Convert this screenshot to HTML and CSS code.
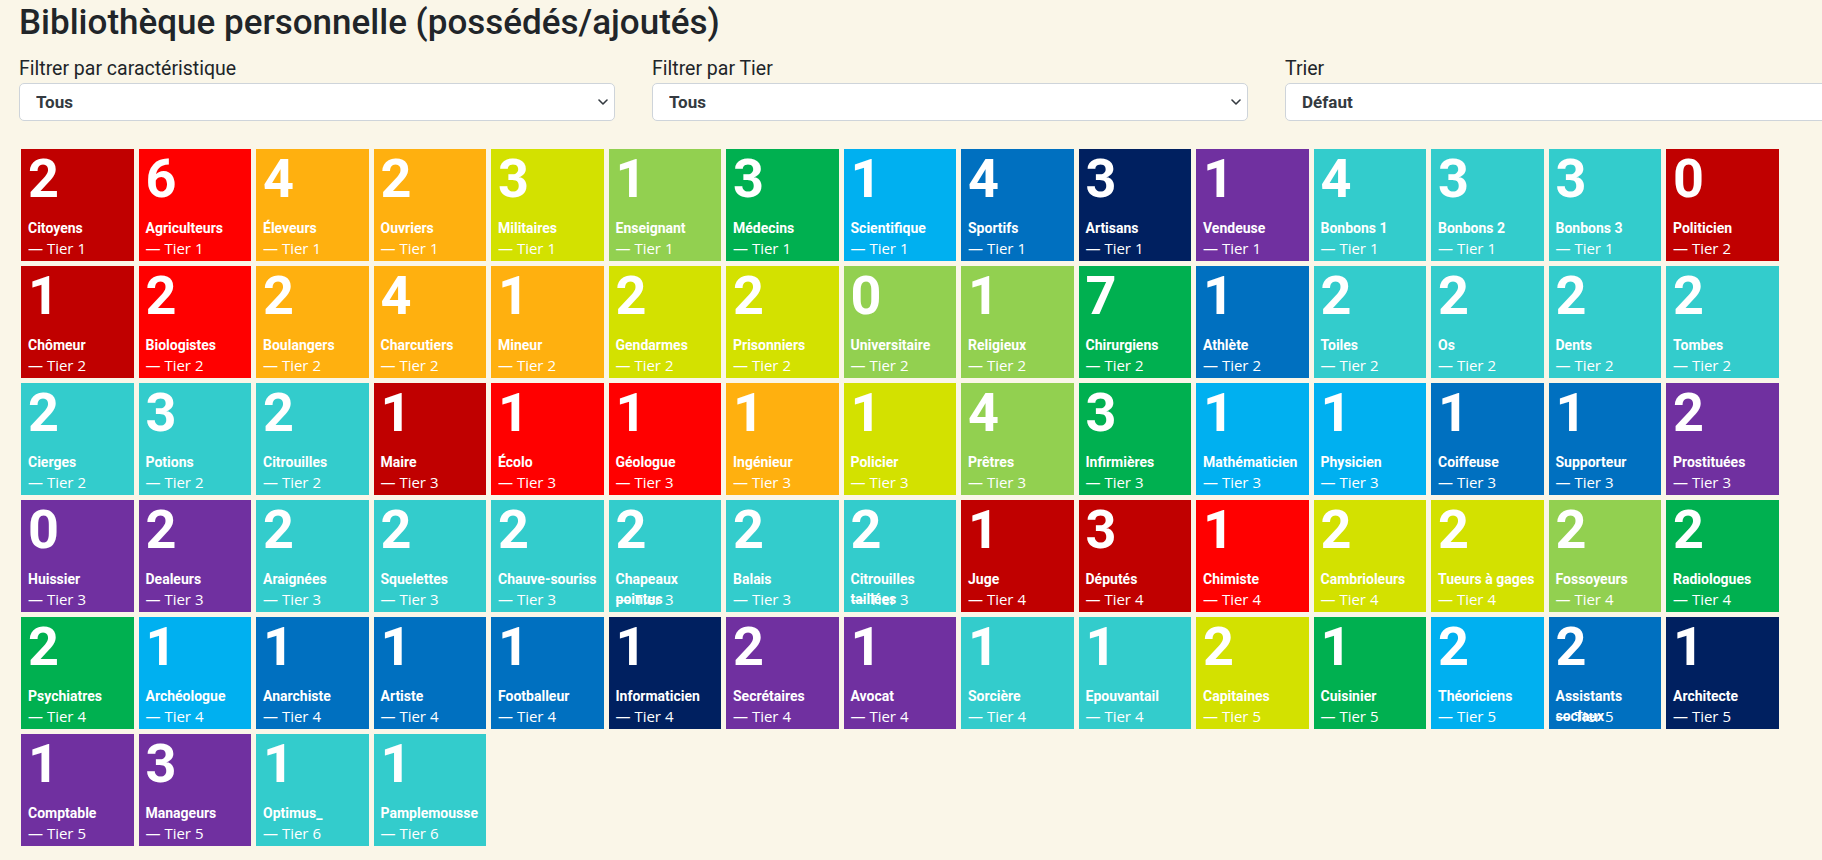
FILE: index.html
```html
<!DOCTYPE html>
<html lang="fr">
<head>
    <meta charset="UTF-8">
    <meta name="viewport" content="width=device-width, initial-scale=1.0">
    <title>Bibliothèque personnelle</title>
    <link rel="stylesheet" href="styles.css">
</head>
<body>
<div class="page">
    <h1 class="page-title">Bibliothèque personnelle (possédés/ajoutés)</h1>

    <div class="filters">
        <div class="filter">
            <label class="filter-label" for="filterTrait">Filtrer par caractéristique</label>
            <div class="select-wrap">
                <select id="filterTrait" class="filter-select"><option>Tous</option></select>
                <svg class="select-arrow" viewBox="0 0 10 6" width="10" height="6"><path d="M1 1l4 4 4-4" fill="none" stroke="#343a40" stroke-width="1.6" stroke-linecap="round" stroke-linejoin="round"/></svg>
            </div>
        </div>
        <div class="filter">
            <label class="filter-label" for="filterTier">Filtrer par Tier</label>
            <div class="select-wrap">
                <select id="filterTier" class="filter-select"><option>Tous</option></select>
                <svg class="select-arrow" viewBox="0 0 10 6" width="10" height="6"><path d="M1 1l4 4 4-4" fill="none" stroke="#343a40" stroke-width="1.6" stroke-linecap="round" stroke-linejoin="round"/></svg>
            </div>
        </div>
        <div class="filter">
            <label class="filter-label" for="sortBy">Trier</label>
            <div class="select-wrap">
                <select id="sortBy" class="filter-select"><option>Défaut</option></select>
                <svg class="select-arrow" viewBox="0 0 10 6" width="10" height="6"><path d="M1 1l4 4 4-4" fill="none" stroke="#343a40" stroke-width="1.6" stroke-linecap="round" stroke-linejoin="round"/></svg>
            </div>
        </div>
    </div>

    <div class="tiles">
        <!-- row 1 -->
        <div class="tile c-darkred"><div class="tile-count">2</div><div class="tile-name">Citoyens</div><div class="tile-tier">— Tier 1</div></div>
        <div class="tile c-red"><div class="tile-count">6</div><div class="tile-name">Agriculteurs</div><div class="tile-tier">— Tier 1</div></div>
        <div class="tile c-orange"><div class="tile-count">4</div><div class="tile-name">Éleveurs</div><div class="tile-tier">— Tier 1</div></div>
        <div class="tile c-orange"><div class="tile-count">2</div><div class="tile-name">Ouvriers</div><div class="tile-tier">— Tier 1</div></div>
        <div class="tile c-lime"><div class="tile-count">3</div><div class="tile-name">Militaires</div><div class="tile-tier">— Tier 1</div></div>
        <div class="tile c-lightgreen"><div class="tile-count">1</div><div class="tile-name">Enseignant</div><div class="tile-tier">— Tier 1</div></div>
        <div class="tile c-green"><div class="tile-count">3</div><div class="tile-name">Médecins</div><div class="tile-tier">— Tier 1</div></div>
        <div class="tile c-lightblue"><div class="tile-count">1</div><div class="tile-name">Scientifique</div><div class="tile-tier">— Tier 1</div></div>
        <div class="tile c-blue"><div class="tile-count">4</div><div class="tile-name">Sportifs</div><div class="tile-tier">— Tier 1</div></div>
        <div class="tile c-darkblue"><div class="tile-count">3</div><div class="tile-name">Artisans</div><div class="tile-tier">— Tier 1</div></div>
        <div class="tile c-purple"><div class="tile-count">1</div><div class="tile-name">Vendeuse</div><div class="tile-tier">— Tier 1</div></div>
        <div class="tile c-teal"><div class="tile-count">4</div><div class="tile-name">Bonbons 1</div><div class="tile-tier">— Tier 1</div></div>
        <div class="tile c-teal"><div class="tile-count">3</div><div class="tile-name">Bonbons 2</div><div class="tile-tier">— Tier 1</div></div>
        <div class="tile c-teal"><div class="tile-count">3</div><div class="tile-name">Bonbons 3</div><div class="tile-tier">— Tier 1</div></div>
        <div class="tile c-darkred"><div class="tile-count">0</div><div class="tile-name">Politicien</div><div class="tile-tier">— Tier 2</div></div>
        <!-- row 2 -->
        <div class="tile c-darkred"><div class="tile-count">1</div><div class="tile-name">Chômeur</div><div class="tile-tier">— Tier 2</div></div>
        <div class="tile c-red"><div class="tile-count">2</div><div class="tile-name">Biologistes</div><div class="tile-tier">— Tier 2</div></div>
        <div class="tile c-orange"><div class="tile-count">2</div><div class="tile-name">Boulangers</div><div class="tile-tier">— Tier 2</div></div>
        <div class="tile c-orange"><div class="tile-count">4</div><div class="tile-name">Charcutiers</div><div class="tile-tier">— Tier 2</div></div>
        <div class="tile c-orange"><div class="tile-count">1</div><div class="tile-name">Mineur</div><div class="tile-tier">— Tier 2</div></div>
        <div class="tile c-lime"><div class="tile-count">2</div><div class="tile-name">Gendarmes</div><div class="tile-tier">— Tier 2</div></div>
        <div class="tile c-lime"><div class="tile-count">2</div><div class="tile-name">Prisonniers</div><div class="tile-tier">— Tier 2</div></div>
        <div class="tile c-lightgreen"><div class="tile-count">0</div><div class="tile-name">Universitaire</div><div class="tile-tier">— Tier 2</div></div>
        <div class="tile c-lightgreen"><div class="tile-count">1</div><div class="tile-name">Religieux</div><div class="tile-tier">— Tier 2</div></div>
        <div class="tile c-green"><div class="tile-count">7</div><div class="tile-name">Chirurgiens</div><div class="tile-tier">— Tier 2</div></div>
        <div class="tile c-blue"><div class="tile-count">1</div><div class="tile-name">Athlète</div><div class="tile-tier">— Tier 2</div></div>
        <div class="tile c-teal"><div class="tile-count">2</div><div class="tile-name">Toiles</div><div class="tile-tier">— Tier 2</div></div>
        <div class="tile c-teal"><div class="tile-count">2</div><div class="tile-name">Os</div><div class="tile-tier">— Tier 2</div></div>
        <div class="tile c-teal"><div class="tile-count">2</div><div class="tile-name">Dents</div><div class="tile-tier">— Tier 2</div></div>
        <div class="tile c-teal"><div class="tile-count">2</div><div class="tile-name">Tombes</div><div class="tile-tier">— Tier 2</div></div>
        <!-- row 3 -->
        <div class="tile c-teal"><div class="tile-count">2</div><div class="tile-name">Cierges</div><div class="tile-tier">— Tier 2</div></div>
        <div class="tile c-teal"><div class="tile-count">3</div><div class="tile-name">Potions</div><div class="tile-tier">— Tier 2</div></div>
        <div class="tile c-teal"><div class="tile-count">2</div><div class="tile-name">Citrouilles</div><div class="tile-tier">— Tier 2</div></div>
        <div class="tile c-darkred"><div class="tile-count">1</div><div class="tile-name">Maire</div><div class="tile-tier">— Tier 3</div></div>
        <div class="tile c-red"><div class="tile-count">1</div><div class="tile-name">Écolo</div><div class="tile-tier">— Tier 3</div></div>
        <div class="tile c-red"><div class="tile-count">1</div><div class="tile-name">Géologue</div><div class="tile-tier">— Tier 3</div></div>
        <div class="tile c-orange"><div class="tile-count">1</div><div class="tile-name">Ingénieur</div><div class="tile-tier">— Tier 3</div></div>
        <div class="tile c-lime"><div class="tile-count">1</div><div class="tile-name">Policier</div><div class="tile-tier">— Tier 3</div></div>
        <div class="tile c-lightgreen"><div class="tile-count">4</div><div class="tile-name">Prêtres</div><div class="tile-tier">— Tier 3</div></div>
        <div class="tile c-green"><div class="tile-count">3</div><div class="tile-name">Infirmières</div><div class="tile-tier">— Tier 3</div></div>
        <div class="tile c-lightblue"><div class="tile-count">1</div><div class="tile-name">Mathématicien</div><div class="tile-tier">— Tier 3</div></div>
        <div class="tile c-lightblue"><div class="tile-count">1</div><div class="tile-name">Physicien</div><div class="tile-tier">— Tier 3</div></div>
        <div class="tile c-blue"><div class="tile-count">1</div><div class="tile-name">Coiffeuse</div><div class="tile-tier">— Tier 3</div></div>
        <div class="tile c-blue"><div class="tile-count">1</div><div class="tile-name">Supporteur</div><div class="tile-tier">— Tier 3</div></div>
        <div class="tile c-purple"><div class="tile-count">2</div><div class="tile-name">Prostituées</div><div class="tile-tier">— Tier 3</div></div>
        <!-- row 4 -->
        <div class="tile c-purple"><div class="tile-count">0</div><div class="tile-name">Huissier</div><div class="tile-tier">— Tier 3</div></div>
        <div class="tile c-purple"><div class="tile-count">2</div><div class="tile-name">Dealeurs</div><div class="tile-tier">— Tier 3</div></div>
        <div class="tile c-teal"><div class="tile-count">2</div><div class="tile-name">Araignées</div><div class="tile-tier">— Tier 3</div></div>
        <div class="tile c-teal"><div class="tile-count">2</div><div class="tile-name">Squelettes</div><div class="tile-tier">— Tier 3</div></div>
        <div class="tile c-teal"><div class="tile-count">2</div><div class="tile-name"><span class="nowrap">Chauve-souriss</span></div><div class="tile-tier">— Tier 3</div></div>
        <div class="tile c-teal"><div class="tile-count">2</div><div class="tile-name">Chapeaux pointus</div><div class="tile-tier">— Tier 3</div></div>
        <div class="tile c-teal"><div class="tile-count">2</div><div class="tile-name">Balais</div><div class="tile-tier">— Tier 3</div></div>
        <div class="tile c-teal"><div class="tile-count">2</div><div class="tile-name">Citrouilles taillées</div><div class="tile-tier">— Tier 3</div></div>
        <div class="tile c-darkred"><div class="tile-count">1</div><div class="tile-name">Juge</div><div class="tile-tier">— Tier 4</div></div>
        <div class="tile c-darkred"><div class="tile-count">3</div><div class="tile-name">Députés</div><div class="tile-tier">— Tier 4</div></div>
        <div class="tile c-red"><div class="tile-count">1</div><div class="tile-name">Chimiste</div><div class="tile-tier">— Tier 4</div></div>
        <div class="tile c-lime"><div class="tile-count">2</div><div class="tile-name">Cambrioleurs</div><div class="tile-tier">— Tier 4</div></div>
        <div class="tile c-lime"><div class="tile-count">2</div><div class="tile-name">Tueurs à gages</div><div class="tile-tier">— Tier 4</div></div>
        <div class="tile c-lightgreen"><div class="tile-count">2</div><div class="tile-name">Fossoyeurs</div><div class="tile-tier">— Tier 4</div></div>
        <div class="tile c-green"><div class="tile-count">2</div><div class="tile-name">Radiologues</div><div class="tile-tier">— Tier 4</div></div>
        <!-- row 5 -->
        <div class="tile c-green"><div class="tile-count">2</div><div class="tile-name">Psychiatres</div><div class="tile-tier">— Tier 4</div></div>
        <div class="tile c-lightblue"><div class="tile-count">1</div><div class="tile-name">Archéologue</div><div class="tile-tier">— Tier 4</div></div>
        <div class="tile c-blue"><div class="tile-count">1</div><div class="tile-name">Anarchiste</div><div class="tile-tier">— Tier 4</div></div>
        <div class="tile c-blue"><div class="tile-count">1</div><div class="tile-name">Artiste</div><div class="tile-tier">— Tier 4</div></div>
        <div class="tile c-blue"><div class="tile-count">1</div><div class="tile-name">Footballeur</div><div class="tile-tier">— Tier 4</div></div>
        <div class="tile c-darkblue"><div class="tile-count">1</div><div class="tile-name">Informaticien</div><div class="tile-tier">— Tier 4</div></div>
        <div class="tile c-purple"><div class="tile-count">2</div><div class="tile-name">Secrétaires</div><div class="tile-tier">— Tier 4</div></div>
        <div class="tile c-purple"><div class="tile-count">1</div><div class="tile-name">Avocat</div><div class="tile-tier">— Tier 4</div></div>
        <div class="tile c-teal"><div class="tile-count">1</div><div class="tile-name">Sorcière</div><div class="tile-tier">— Tier 4</div></div>
        <div class="tile c-teal"><div class="tile-count">1</div><div class="tile-name">Epouvantail</div><div class="tile-tier">— Tier 4</div></div>
        <div class="tile c-lime"><div class="tile-count">2</div><div class="tile-name">Capitaines</div><div class="tile-tier">— Tier 5</div></div>
        <div class="tile c-green"><div class="tile-count">1</div><div class="tile-name">Cuisinier</div><div class="tile-tier">— Tier 5</div></div>
        <div class="tile c-lightblue"><div class="tile-count">2</div><div class="tile-name">Théoriciens</div><div class="tile-tier">— Tier 5</div></div>
        <div class="tile c-blue"><div class="tile-count">2</div><div class="tile-name">Assistants sociaux</div><div class="tile-tier">— Tier 5</div></div>
        <div class="tile c-darkblue"><div class="tile-count">1</div><div class="tile-name">Architecte</div><div class="tile-tier">— Tier 5</div></div>
        <!-- row 6 -->
        <div class="tile c-purple"><div class="tile-count">1</div><div class="tile-name">Comptable</div><div class="tile-tier">— Tier 5</div></div>
        <div class="tile c-purple"><div class="tile-count">3</div><div class="tile-name">Manageurs</div><div class="tile-tier">— Tier 5</div></div>
        <div class="tile c-teal"><div class="tile-count">1</div><div class="tile-name">Optimus_</div><div class="tile-tier">— Tier 6</div></div>
        <div class="tile c-teal"><div class="tile-count">1</div><div class="tile-name">Pamplemousse</div><div class="tile-tier">— Tier 6</div></div>
    </div>
</div>
</body>
</html>
```

FILE: styles.css
```css
html, body {
    overflow: hidden;
}

body {
    margin: 0;
    background-color: #faf6e8;
    color: #212529;
    font-family: Roboto, "Liberation Sans", sans-serif;
}

.page {
    padding: 2px 0 0 19px;
}

.page-title {
    margin: 0;
    font-size: 35px;
    font-weight: 500;
    line-height: 1.2;
}

/* filters */
.filters {
    display: grid;
    grid-template-columns: repeat(3, 596px);
    column-gap: 37px;
    margin-top: 12px;
}

.filter-label {
    display: block;
    font-size: 19.5px;
    line-height: 26px;
    margin-bottom: 1px;
}

.select-wrap {
    position: relative;
}

.filter-select {
    display: block;
    width: 100%;
    height: 38px;
    padding: 0 40px 0 16px;
    border: 1px solid #ced4da;
    border-radius: 5px;
    background-color: #fff;
    color: #343a40;
    font-family: inherit;
    font-size: 17px;
    font-weight: 700;
    appearance: none;
    -webkit-appearance: none;
}

.select-arrow {
    position: absolute;
    right: 7px;
    top: 16px;
    pointer-events: none;
}

/* tiles */
.tiles {
    display: grid;
    grid-template-columns: repeat(15, 112.5px);
    grid-auto-rows: 112px;
    gap: 5px;
    margin: 28px 0 0 2px;
}

.tile {
    display: flex;
    flex-direction: column;
    padding: 3px 7px 3px;
    color: #fff;
}

.tile-count {
    font-size: 54px;
    font-weight: 700;
    line-height: 1;
}

.tile-name {
    margin-top: auto;
    height: 20px;
    font-size: 14px;
    font-weight: 700;
    line-height: 20px;
}

.tile-tier {
    font-family: "Open Sans", Roboto, sans-serif;
    font-size: 15px;
    line-height: 20px;
}

.nowrap {
    white-space: nowrap;
}

.c-darkred { background-color: #c00000; }
.c-red { background-color: #ff0000; }
.c-orange { background-color: #ffb00f; }
.c-lime { background-color: #d3e100; }
.c-lightgreen { background-color: #92d050; }
.c-green { background-color: #00b050; }
.c-lightblue { background-color: #00b0f0; }
.c-blue { background-color: #0070c0; }
.c-darkblue { background-color: #002060; }
.c-purple { background-color: #7030a0; }
.c-teal { background-color: #33cccc; }
```
